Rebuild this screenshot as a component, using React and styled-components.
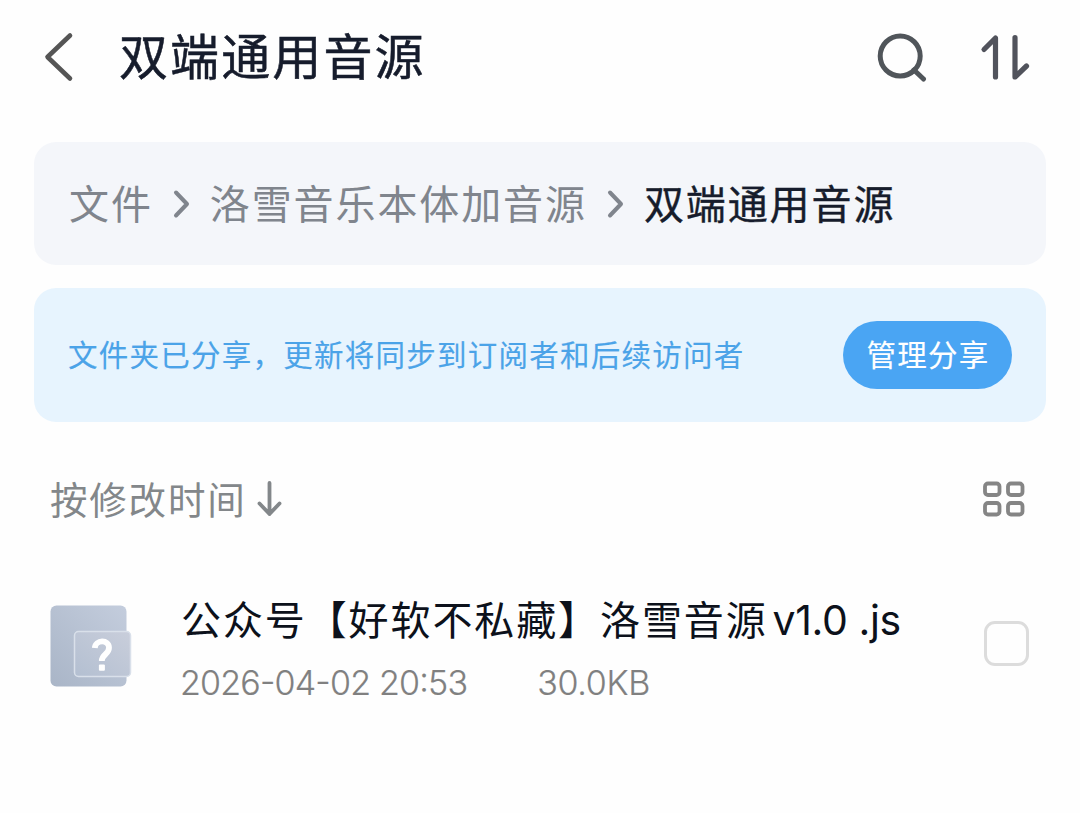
import styled, { createGlobalStyle } from "styled-components";

const GlobalStyle = createGlobalStyle`
*{
    box-sizing:border-box;
}
body{
    margin:0;
    background-color:#fefefe;
    font-family:"Noto Sans CJK SC", sans-serif;
}
`
const Container = styled.div`
width:1080px;
height:813px;
overflow:hidden;
white-space:nowrap;
`
const Header = styled.div`
height:142px;
padding:31px 50px 0 44px;
display:flex;
align-items:flex-start;
`
const Icon = styled.svg`
display:block;
flex-shrink:0;
fill:none;
stroke:${(props) => props.color};
stroke-width:${(props) => props.$stroke};
stroke-linecap:round;
stroke-linejoin:round;
`
const Title = styled.h1`
flex:1;
margin:-3px 0 0 43px;
font-size:49px;
line-height:52px;
font-weight:400;
-webkit-text-stroke:0.5px #161c2c;
letter-spacing:2.1px;
color:#161c2c;
`
const Actions = styled.div`
display:flex;
gap:53px;
`
const Panel = styled.div`
margin:0 34px;
border-radius:22px;
display:flex;
align-items:center;
`
const Breadcrumb = styled(Panel)`
height:123px;
padding:0 0 0 35px;
background-color:#f4f6fa;
`
const Crumb = styled.span`
padding-bottom:4px;
font-size:40px;
line-height:56px;
letter-spacing:1.9px;
-webkit-text-stroke:${(props) => (props.$active ? "0.4px" : "0")};
color:${(props) => (props.$active ? "#161c2c" : "#80858d")};
`
const Separator = styled(Icon)`
margin:0 20px;
`
const ShareBar = styled(Panel)`
height:134px;
margin-top:23px;
padding:0 34px 0 34px;
justify-content:space-between;
background-color:#e7f4fe;
`
const ShareText = styled.span`
padding-bottom:4px;
font-size:29.5px;
letter-spacing:1.25px;
-webkit-text-stroke:0.15px;
color:#4ba3e8;
`
const Button = styled.button`
width:169px;
height:68px;
padding:0 0 4px 1px;
border:none;
border-radius:34px;
background-color:#4aa5f3;
color:white;
font-family:inherit;
font-size:29.5px;
letter-spacing:1.2px;
-webkit-text-stroke:0.15px;
cursor:pointer;
`
const SortBar = styled.div`
height:154px;
padding:0 55px 0 50px;
display:flex;
align-items:center;
justify-content:space-between;
`
const Sort = styled.div`
display:flex;
align-items:center;
gap:10px;
color:#83878a;
`
const SortLabel = styled.span`
padding-bottom:4px;
font-size:37.5px;
letter-spacing:1.8px;
`
const FileRow = styled.div`
padding:18px 51px 0 50px;
display:flex;
align-items:flex-start;
`
const FileIcon = styled.svg`
display:block;
flex-shrink:0;
margin-top:10px;
`
const Info = styled.div`
flex:1;
margin-left:49px;
`
const Name = styled.div`
height:56px;
margin-top:-4px;
display:flex;
align-items:baseline;
font-size:40px;
line-height:56px;
letter-spacing:1.9px;
color:#0c111b;
`
const Latin = styled.span`
margin-left:5px;
font-family:Inter, sans-serif;
font-size:41px;
letter-spacing:-0.4px;
white-space:pre;
`
const Meta = styled.div`
margin:17px 0 0 -1px;
display:flex;
gap:70px;
font-family:Inter, sans-serif;
font-size:34px;
line-height:40px;
font-weight:300;
font-feature-settings:"case";
letter-spacing:-0.8px;
-webkit-text-stroke:0.2px;
color:#808080;
`
const Size = styled.span`
letter-spacing:-0.3px;
`
const Checkbox = styled.div`
width:45px;
height:45px;
margin-top:27px;
border:3px solid #dcdcdc;
border-radius:11px;
`

const Chevron = () => (
    <Separator width="17" height="30" viewBox="0 0 17 30" color="#80858d" $stroke="4">
        <path d="M3 3.5 14 15 3 26.5" />
    </Separator>
)

const App = () => {
    return (
        <Container>
            <GlobalStyle />
            <Header>
                <Icon width="32" height="52" viewBox="0 0 32 52" color="#555555" $stroke="4.6">
                    <path d="M26 4.5 3.5 26 26 47.5" />
                </Icon>
                <Title>双端通用音源</Title>
                <Actions>
                    <Icon width="50" height="52" viewBox="0 0 50 52" color="#50555a" $stroke="5">
                        <circle cx="23.2" cy="25" r="20" />
                        <path d="M37 39 46.5 48" />
                    </Icon>
                    <Icon width="50" height="52" viewBox="0 0 50 52" color="#51535c" $stroke="5.2">
                        <path d="M4 18.5 15.5 7V46" />
                        <path d="M35 6.5V46L46.5 35" />
                    </Icon>
                </Actions>
            </Header>
            <Breadcrumb>
                <Crumb>文件</Crumb>
                <Chevron />
                <Crumb>洛雪音乐本体加音源</Crumb>
                <Chevron />
                <Crumb $active>双端通用音源</Crumb>
            </Breadcrumb>
            <ShareBar>
                <ShareText>文件夹已分享，更新将同步到订阅者和后续访问者</ShareText>
                <Button>管理分享</Button>
            </ShareBar>
            <SortBar>
                <Sort>
                    <SortLabel>按修改时间</SortLabel>
                    <Icon width="25" height="36" viewBox="0 0 25 36" color="#83878a" $stroke="3.8">
                        <path d="M12.5 2V33M2.5 22.5 12.5 33 22.5 22.5" />
                    </Icon>
                </Sort>
                <Icon width="42" height="36" viewBox="0 0 42 36" color="#858585" $stroke="3.8">
                    <rect x="2" y="2.5" width="14.5" height="11.5" rx="3" />
                    <rect x="25" y="2.5" width="14.5" height="11.5" rx="3" />
                    <rect x="2" y="22" width="14.5" height="11.5" rx="3" />
                    <rect x="25" y="22" width="14.5" height="11.5" rx="3" />
                </Icon>
            </SortBar>
            <FileRow>
                <FileIcon width="82" height="84" viewBox="0 0 82 84">
                    <defs>
                        <linearGradient id="back" x1="1" y1="0" x2="0" y2="1">
                            <stop offset="0" stopColor="#c4cddd" />
                            <stop offset="1" stopColor="#a9b5c7" />
                        </linearGradient>
                        <linearGradient id="front" x1="0" y1="1" x2="1" y2="0">
                            <stop offset="0" stopColor="#b3bfd1" />
                            <stop offset="1" stopColor="#c9cedb" />
                        </linearGradient>
                    </defs>
                    <rect x="0.5" y="1.5" width="76" height="81" rx="6" fill="url(#back)" />
                    <rect x="24.5" y="27.5" width="56" height="45" rx="4" fill="url(#front)" stroke="#d9e0ea" strokeWidth="1.5" />
                    <path d="M44.8 44C45.3 35.5 59 35 59 43.8 59 50.5 51.8 50 51.8 57" fill="none" stroke="white" strokeWidth="5.8" />
                    <rect x="48.9" y="60.5" width="6" height="6.2" rx="1" fill="white" />
                </FileIcon>
                <Info>
                    <Name>
                        公众号【好软不私藏】洛雪音源
                        <Latin>v1.0 .js</Latin>
                    </Name>
                    <Meta>
                        <span>2026-04-02 20:53</span>
                        <Size>30.0KB</Size>
                    </Meta>
                </Info>
                <Checkbox />
            </FileRow>
        </Container>
    )
}

export default App;
